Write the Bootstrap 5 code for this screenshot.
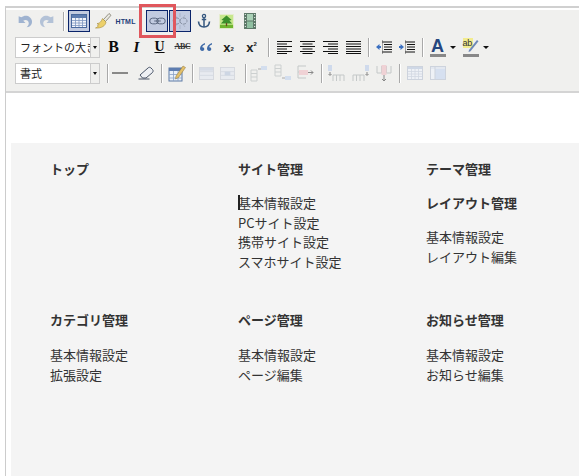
<!DOCTYPE html>
<html lang="ja">
<head>
<meta charset="utf-8">
<title>エディタ</title>
<link rel="stylesheet" href="https://cdn.jsdelivr.net/npm/bootstrap@5.3.0/dist/css/bootstrap.min.css">
<style>
html,body{margin:0;height:476px;overflow:hidden;background:#fff}
body{font-family:"Liberation Sans","Noto Sans CJK JP",sans-serif;color:#333}
.editor-wrap{margin:6px 0 0 5px;border-top:2px solid #d0d0d0;border-left:1px solid #ccc;height:470px;position:relative}
.tools{background:#f0f0ee;height:83px;border-bottom:2px solid #d4d4d4;margin-top:-1px}
.tool-row{height:22px;align-items:center}
.r1{padding-left:7px;margin-top:3px}
.r2{padding-left:9px;margin-top:4px}
.r3{padding-left:9px;margin-top:4px}
.tb{width:23px;height:21px;flex:none;display:flex;align-items:center;justify-content:center;color:#0b0b0b;font-family:"Liberation Serif",serif;line-height:1}
.tb svg{display:block}
.on{width:22px;height:22px;background:#c2cbe0;border:1px solid #0a246a}
.sep{width:9px;height:21px;flex:none;position:relative}
.sep::after{content:"";position:absolute;left:4px;top:1px;bottom:1px;width:1px;background:#a9a9a9;box-shadow:1px 0 0 #fff}
.s7{width:7px}.s7::after{left:3px}
.s8{width:8px}.s8::after{left:4px}
.s10{width:10px}.s10::after{left:5px}
.w8{width:8px}.w18{width:18px}.w19{width:19px}.w20{width:20px}.w21{width:21px}.w22{width:22px}
.ml1{margin-left:1px}.ml2{margin-left:2px}.ml3{margin-left:3px}.ml5{margin-left:5px}.ml9{margin-left:9px}
.pick{width:85px;height:21px;flex:none;background:#fff;border:1px solid #ccc;font:11px/19px "Noto Sans CJK JP",sans-serif;color:#222;position:relative;padding-left:4px;overflow:hidden;white-space:nowrap}
.pick-txt{display:block;width:74px;overflow:hidden}
.pick::after{content:"";position:absolute;right:0;top:0;bottom:0;width:9px;background:#f0f0ee;border-left:1px solid #ccc}
.pick::before{content:"";position:absolute;z-index:1;right:2px;top:8px;border:2.5px solid transparent;border-top:3px solid #111}
.fb{font-weight:700;font-size:16px}
.fi{font-style:italic;font-weight:700;font-size:15px}
.fu{font-weight:700;font-size:14px;text-decoration:underline}
.fabc{font-size:8px;font-weight:700;text-decoration:line-through;color:#333;letter-spacing:-.3px}
.fhtml{font:700 7px "Liberation Sans",sans-serif;color:#1d3c78;letter-spacing:.2px}
.fx{font:700 13px "Liberation Sans",sans-serif;color:#222}
.fx sub,.fx sup{font-size:6px}
.fa{font:700 18px/1 "Liberation Sans",sans-serif;color:#26477f;padding-bottom:3px;border-bottom:3px solid #888;width:16px;text-align:center;display:block;height:20px}
.fab{position:relative;width:16px;height:19px;display:block;border-bottom:3px solid #888}
.fab-txt{display:block;width:10px;height:10px;background:#f2ec8e;font:9px/10px "Liberation Sans",sans-serif;color:#333;letter-spacing:-.3px}
.fab svg{position:absolute;left:5px;top:0}
.arrow-d{width:0;height:0;border:3px solid transparent;border-top:3px solid #111;margin-top:3px}
.mark-box{position:absolute;left:133px;top:-4px;width:37px;height:34px;border:3px solid #e0575d;pointer-events:none}
.canvas-gap{height:50px;background:#fff}
.panel{background:#f4f4f4;margin-left:5px;height:340px;padding:16px 0 0 39px;display:grid;grid-template-columns:188px 188px 160px;grid-template-rows:151px 151px;font:13px/19.5px "Noto Sans CJK JP",sans-serif;color:#333;overflow:hidden}
.head{font-weight:700;font-size:13px;line-height:19px;margin:0 0 15px;color:#333}
.panel>div:nth-child(n+4) .head{margin-bottom:16px}
.caret{position:relative}
.caret::before{content:"";position:absolute;left:0;top:2px;width:1.5px;height:15px;background:#222}
.cell-items{margin:0;padding:0;list-style:none}
</style>
</head>
<body>
<svg width="0" height="0" class="d-none" aria-hidden="true">
<defs>
<symbol id="undo" viewBox="0 0 16 16"><path d="M2.500 3v6.500H9L6.800 7.300C9 5.800 11.800 6.800 12 9.500c.1 1.500-.7 3-2 4 3.500-.3 5.500-3 5-6.200C14.300 3 9 .8 5 4z" fill="#9fb3d0"/></symbol>
<symbol id="brush" viewBox="0 0 18 18"><path d="M9.500 7.500l5.500-6 2 1.800-5.500 6.200z" fill="#e9e9e2" stroke="#6e6a5a" stroke-width=".7"/><path d="M8.500 6.500l3.500 3.500c-.5 3.500-4 6.500-10.500 6 2.500-1 3-2 2-2.700 2-.6 1.500-1-.5-1.600C6 11.500 7.500 9 8.500 6.500z" fill="#ecd06a" stroke="#a48c3e" stroke-width=".6"/></symbol>
<symbol id="tbl" viewBox="0 0 16 16"><rect x=".5" y="1.500" width="15" height="13" fill="#f4f6fb" stroke="#4a6a9e"/><rect x="1" y="2" width="14" height="3" fill="#5e7db0"/><path d="M1 7.500h14M1 10h14M1 12.500h14M4.500 5v9M8 5v9M11.500 5v9" stroke="#7d97c0" stroke-width=".8"/></symbol>
<symbol id="link" viewBox="0 0 18 10"><rect x=".8" y="2" width="9" height="6" rx="3" fill="none" stroke="#55627a" stroke-width="1"/><rect x="8.200" y="2" width="9" height="6" rx="3" fill="none" stroke="#55627a" stroke-width="1"/><path d="M5.500 5h7" stroke="#55627a" stroke-width="1"/></symbol>
<symbol id="unlink" viewBox="0 0 18 18"><path d="M9 1v4M4 3l2 3M14 3l-2 3M9 13v4M4 15l2-3M14 15l-2-3" stroke="#a2adbf" stroke-width=".7"/><rect x="2" y="6" width="7" height="6" rx="3" fill="none" stroke="#8a94a6" stroke-width="1" stroke-dasharray="3 1"/><rect x="9" y="6" width="7" height="6" rx="3" fill="none" stroke="#8a94a6" stroke-width="1" stroke-dasharray="3 1"/></symbol>
<symbol id="anchor" viewBox="0 0 16 16"><circle cx="8" cy="3" r="1.600" fill="none" stroke="#35577f" stroke-width="1.300"/><path d="M8 4.500V14M5.800 6.500h4.400" stroke="#35577f" stroke-width="1.500"/><path d="M2.500 8.500c.3 3.700 2.800 5.500 5.500 5.500s5.200-1.800 5.500-5.500" fill="none" stroke="#35577f" stroke-width="1.600"/></symbol>
<symbol id="pic" viewBox="0 0 16 16"><rect x=".5" y=".5" width="15" height="15" fill="#c7e88c" stroke="#e6ecd0"/><rect x="1" y="11.500" width="14" height="3.500" fill="#6fb52f"/><path d="M8 1.500l5.500 5-2.500.5 3 3-4.500.2h-3L2 10l3-3-2.500-.5z" fill="#3a8f2a"/><path d="M7.300 9.500h1.400V13H7.300z" fill="#6b4a20"/></symbol>
<symbol id="film" viewBox="0 0 12 16"><rect width="12" height="16" fill="#5d7868"/><rect x="3" y="1" width="6" height="6.500" fill="#a9d0b5"/><rect x="3" y="8.500" width="6" height="6.500" fill="#8fbfa0"/><path d="M.8 1.500h1.200M.8 4.500h1.200M.8 7.500h1.200M.8 10.500h1.200M.8 13.500h1.200M10 1.500h1.200M10 4.500h1.200M10 7.500h1.200M10 10.500h1.200M10 13.500h1.200" stroke="#d6e3da" stroke-width="1.200"/></symbol>
<symbol id="quote" viewBox="0 0 14 10"><path d="M6 1C3 2 1 4 1 6.500 1 8 2 9 3.200 9 4.500 9 5.300 8 5.300 7 5.300 6 4.500 5 3.200 5.200 3.500 4 4.500 3 6 2.500zM13 1c-3 1-5 3-5 5.500C8 8 9 9 10.200 9c1.300 0 2.100-1 2.100-2 0-1-.8-2-2.100-1.800.3-1.200 1.300-2.200 2.800-2.700z" fill="#3e6aa8"/></symbol>
<symbol id="aleft" viewBox="0 0 15 13"><path d="M0 .5h15M0 3h10M0 5.500h15M0 8h10M0 10.500h15M0 12.500h10" stroke="#111"/></symbol>
<symbol id="acenter" viewBox="0 0 15 13"><path d="M0 .5h15M2.500 3h10M0 5.500h15M2.500 8h10M0 10.500h15M2.500 12.500h10" stroke="#111"/></symbol>
<symbol id="aright" viewBox="0 0 15 13"><path d="M0 .5h15M5 3h10M0 5.500h15M5 8h10M0 10.500h15M5 12.500h10" stroke="#111"/></symbol>
<symbol id="ajust" viewBox="0 0 15 13"><path d="M0 .5h15M0 3h15M0 5.500h15M0 8h15M0 10.500h15M0 12.500h15" stroke="#111"/></symbol>
<symbol id="out" viewBox="0 0 16 15"><path d="M6 2h10M8 4.500h8M8 7h8M8 9.500h8M6 12h10" stroke="#111"/><path d="M6.500 .5v14" stroke="#555" stroke-dasharray="1 1"/><path d="M0 7l3.500-3v2H5v2H3.500v2z" fill="#3a6fc0"/></symbol>
<symbol id="ind" viewBox="0 0 16 15"><path d="M6 2h10M8 4.500h8M8 7h8M8 9.500h8M6 12h10" stroke="#111"/><path d="M6.500 .5v14" stroke="#555" stroke-dasharray="1 1"/><path d="M5 7L1.500 4v2H0v2h1.500v2z" fill="#3a6fc0"/></symbol>
<symbol id="eraser" viewBox="0 0 16 14"><path d="M2 9l8-7c1-1 2-1 3 0l1.500 1.500c.8.8.8 2 0 3L8 12H4.500z" fill="#eef0f4" stroke="#4a5568"/><path d="M.5 13h11" stroke="#4a5568"/></symbol>
<symbol id="tedit" viewBox="0 0 18 18"><rect x="1" y="4" width="13" height="13" fill="#eaf0f8" stroke="#5d7aa5"/><rect x="1" y="4" width="13" height="3" fill="#5e7db0"/><path d="M1 10.500h13M1 14h13M5.500 7v10M10 7v10" stroke="#8aa2c5" stroke-width=".8"/><path d="M8 12l7-10 2.500 1.500-7 10L7.500 15z" fill="#e3c06a" stroke="#8d7338" stroke-width=".5"/></symbol>
<symbol id="rowsa" viewBox="0 0 16 14"><rect x=".5" y=".5" width="15" height="13" fill="#e8ebf0" stroke="#d4d8de"/><path d="M1 5h14M1 9h14" stroke="#d6dae2"/><rect x="1" y="1" width="14" height="3" fill="#d5dbe6"/></symbol>
<symbol id="rowsb" viewBox="0 0 16 14"><rect x=".5" y=".5" width="15" height="13" fill="#e8ebf0" stroke="#d4d8de"/><path d="M1 5h14M1 9h14" stroke="#d6dae2"/><rect x="5" y="5" width="6" height="4" fill="#cdd6e4"/></symbol>
<symbol id="rowup" viewBox="0 0 18 18"><path d="M1 6h6v11H1zM1 9.500h6M1 13h6" fill="none" stroke="#ccd0d0"/><path d="M8 5h3" stroke="#aaa"/><rect x="11" y="2" width="6" height="4" fill="#d3deee"/></symbol>
<symbol id="rowdn" viewBox="0 0 18 18"><path d="M1 1h6v11H1zM1 4.500h6M1 8h6" fill="none" stroke="#ccd0d0"/><path d="M8 14h3" stroke="#aaa"/><rect x="11" y="12" width="6" height="4" fill="#d3deee"/></symbol>
<symbol id="rowdel" viewBox="0 0 18 18"><path d="M1 2h8M1 8h8M1 14h8M1 2v12" fill="none" stroke="#c4c8c8"/><rect x="2" y="6" width="9" height="5" fill="#f0d2d5"/><path d="M11 8.500h5M14 6.500l2 2-2 2" fill="none" stroke="#888"/></symbol>
<symbol id="colb" viewBox="0 0 18 18"><rect x="1" y="1" width="4" height="6" fill="#cfdaec"/><path d="M3 8v3M1.500 10l1.500 1.500L4.500 10" fill="none" stroke="#888"/><path d="M6 17V11h11v6M9.500 11v6M13 11v6" fill="none" stroke="#c4c8c8"/></symbol>
<symbol id="cola" viewBox="0 0 18 18"><rect x="13" y="1" width="4" height="6" fill="#cfdaec"/><path d="M15 8v3M13.500 10l1.500 1.500 1.500-1.500" fill="none" stroke="#888"/><path d="M1 17V11h11v6M4.500 11v6M8 11v6" fill="none" stroke="#c4c8c8"/></symbol>
<symbol id="coldel" viewBox="0 0 18 18"><path d="M2 2v7h14V2M6.500 2v7M11.500 2v7" fill="none" stroke="#c4c8c8"/><rect x="6.500" y="1" width="5" height="10" fill="#f0d2d5"/><path d="M9 11v6M7 15l2 2 2-2" fill="none" stroke="#888"/></symbol>
<symbol id="merge" viewBox="0 0 16 14"><rect x=".5" y=".5" width="15" height="13" fill="#eef1f6" stroke="#cdd3dd"/><rect x="1" y="1" width="14" height="2" fill="#cfd8e6"/><path d="M1 5.500h14M1 8h14M1 10.500h14M4.500 3v10M8 3v10M11.500 3v10" stroke="#d2d8e2" stroke-width=".8"/></symbol>
<symbol id="split" viewBox="0 0 16 14"><rect x=".5" y=".5" width="15" height="13" fill="#eef1f6" stroke="#cdd3dd"/><rect x="5" y="3" width="10" height="10" fill="#d6e0f0"/><rect x="1" y="1" width="14" height="2" fill="#e3e8f0"/><path d="M5 1v12" stroke="#cdd3dd"/></symbol>
</defs>
</svg>

<div class="editor-wrap">
  <div class="tools">
    <div class="d-flex tool-row r1">
      <span class="tb"><svg width="17" height="17"><use href="#undo"/></svg></span>
      <span class="tb opacity-75"><svg width="17" height="17" viewBox="0 0 16 16"><g transform="matrix(-1 0 0 1 16 0)"><use href="#undo" width="16" height="16"/></g></svg></span>
      <span class="sep"></span>
      <span class="tb on"><svg width="16" height="16"><use href="#tbl"/></svg></span>
      <span class="tb ml1"><svg width="18" height="18"><use href="#brush"/></svg></span>
      <span class="tb fhtml">HTML</span>
      <span class="tb on ml9"><svg width="17" height="10"><use href="#link"/></svg></span>
      <span class="tb on ml1"><svg width="18" height="18"><use href="#unlink"/></svg></span>
      <span class="tb ml1"><svg width="16" height="16"><use href="#anchor"/></svg></span>
      <span class="tb"><svg width="15" height="15"><use href="#pic"/></svg></span>
      <span class="tb"><svg width="12" height="16"><use href="#film"/></svg></span>
    </div>
    <div class="d-flex tool-row r2">
      <span class="pick"><span class="pick-txt">フォントの大きさ</span></span>
      <span class="tb fb ml2">B</span>
      <span class="tb fi">I</span>
      <span class="tb fu">U</span>
      <span class="tb fabc">ABC</span>
      <span class="tb"><svg width="14" height="10"><use href="#quote"/></svg></span>
      <span class="tb fx">x<sub>2</sub></span>
      <span class="tb fx">x<sup>2</sup></span>
      <span class="sep s10"></span>
      <span class="tb"><svg width="15" height="13"><use href="#aleft"/></svg></span>
      <span class="tb"><svg width="15" height="13"><use href="#acenter"/></svg></span>
      <span class="tb"><svg width="15" height="13"><use href="#aright"/></svg></span>
      <span class="tb"><svg width="15" height="13"><use href="#ajust"/></svg></span>
      <span class="sep s7"></span>
      <span class="tb"><svg width="16" height="15"><use href="#out"/></svg></span>
      <span class="tb"><svg width="16" height="15"><use href="#ind"/></svg></span>
      <span class="sep s8"></span>
      <span class="tb"><span class="fa">A</span></span>
      <span class="tb w8"><span class="arrow-d"></span></span>
      <span class="tb ml2"><span class="fab"><span class="fab-txt">ab</span><svg width="11" height="15" viewBox="0 0 11 15"><path d="M1 12L9 2l1.500 1.200-8 10L.5 14z" fill="#6d88b8"/></svg></span></span>
      <span class="tb w8"><span class="arrow-d"></span></span>
    </div>
    <div class="d-flex tool-row r3">
      <span class="pick"><span class="pick-txt">書式</span></span>
      <span class="sep s8 ml3"></span>
      <span class="tb w18"><svg width="16" height="2"><rect width="16" height="1" y=".5" fill="#222"/></svg></span>
      <span class="tb ml5"><svg width="16" height="14"><use href="#eraser"/></svg></span>
      <span class="sep s8"></span>
      <span class="tb"><svg width="18" height="18"><use href="#tedit"/></svg></span>
      <span class="sep s8"></span>
      <span class="tb w20"><svg width="15" height="13"><use href="#rowsa"/></svg></span>
      <span class="tb w22"><svg width="15" height="13"><use href="#rowsb"/></svg></span>
      <span class="sep s8 ml3"></span>
      <span class="tb w19"><svg width="18" height="18"><use href="#rowup"/></svg></span>
      <span class="tb ml3"><svg width="18" height="18"><use href="#rowdn"/></svg></span>
      <span class="tb"><svg width="18" height="18"><use href="#rowdel"/></svg></span>
      <span class="sep s8"></span>
      <span class="tb w21"><svg width="18" height="18"><use href="#colb"/></svg></span>
      <span class="tb ml3"><svg width="18" height="18"><use href="#cola"/></svg></span>
      <span class="tb"><svg width="18" height="18"><use href="#coldel"/></svg></span>
      <span class="sep s8"></span>
      <span class="tb"><svg width="16" height="14"><use href="#merge"/></svg></span>
      <span class="tb"><svg width="16" height="14"><use href="#split"/></svg></span>
    </div>
  </div>
  <div class="mark-box"></div>
  <div class="canvas-gap"></div>
  <div class="panel">
    <div><p class="head">トップ</p></div>
    <div><p class="head">サイト管理</p>
      <ul class="cell-items"><li class="caret">基本情報設定</li><li>PCサイト設定</li><li>携帯サイト設定</li><li>スマホサイト設定</li></ul></div>
    <div><p class="head">テーマ管理</p><p class="head">レイアウト管理</p>
      <ul class="cell-items"><li>基本情報設定</li><li>レイアウト編集</li></ul></div>
    <div><p class="head">カテゴリ管理</p>
      <ul class="cell-items"><li>基本情報設定</li><li>拡張設定</li></ul></div>
    <div><p class="head">ページ管理</p>
      <ul class="cell-items"><li>基本情報設定</li><li>ページ編集</li></ul></div>
    <div><p class="head">お知らせ管理</p>
      <ul class="cell-items"><li>基本情報設定</li><li>お知らせ編集</li></ul></div>
  </div>
</div>
<script src="https://cdn.jsdelivr.net/npm/bootstrap@5.3.0/dist/js/bootstrap.bundle.min.js"></script>
</body>
</html>
